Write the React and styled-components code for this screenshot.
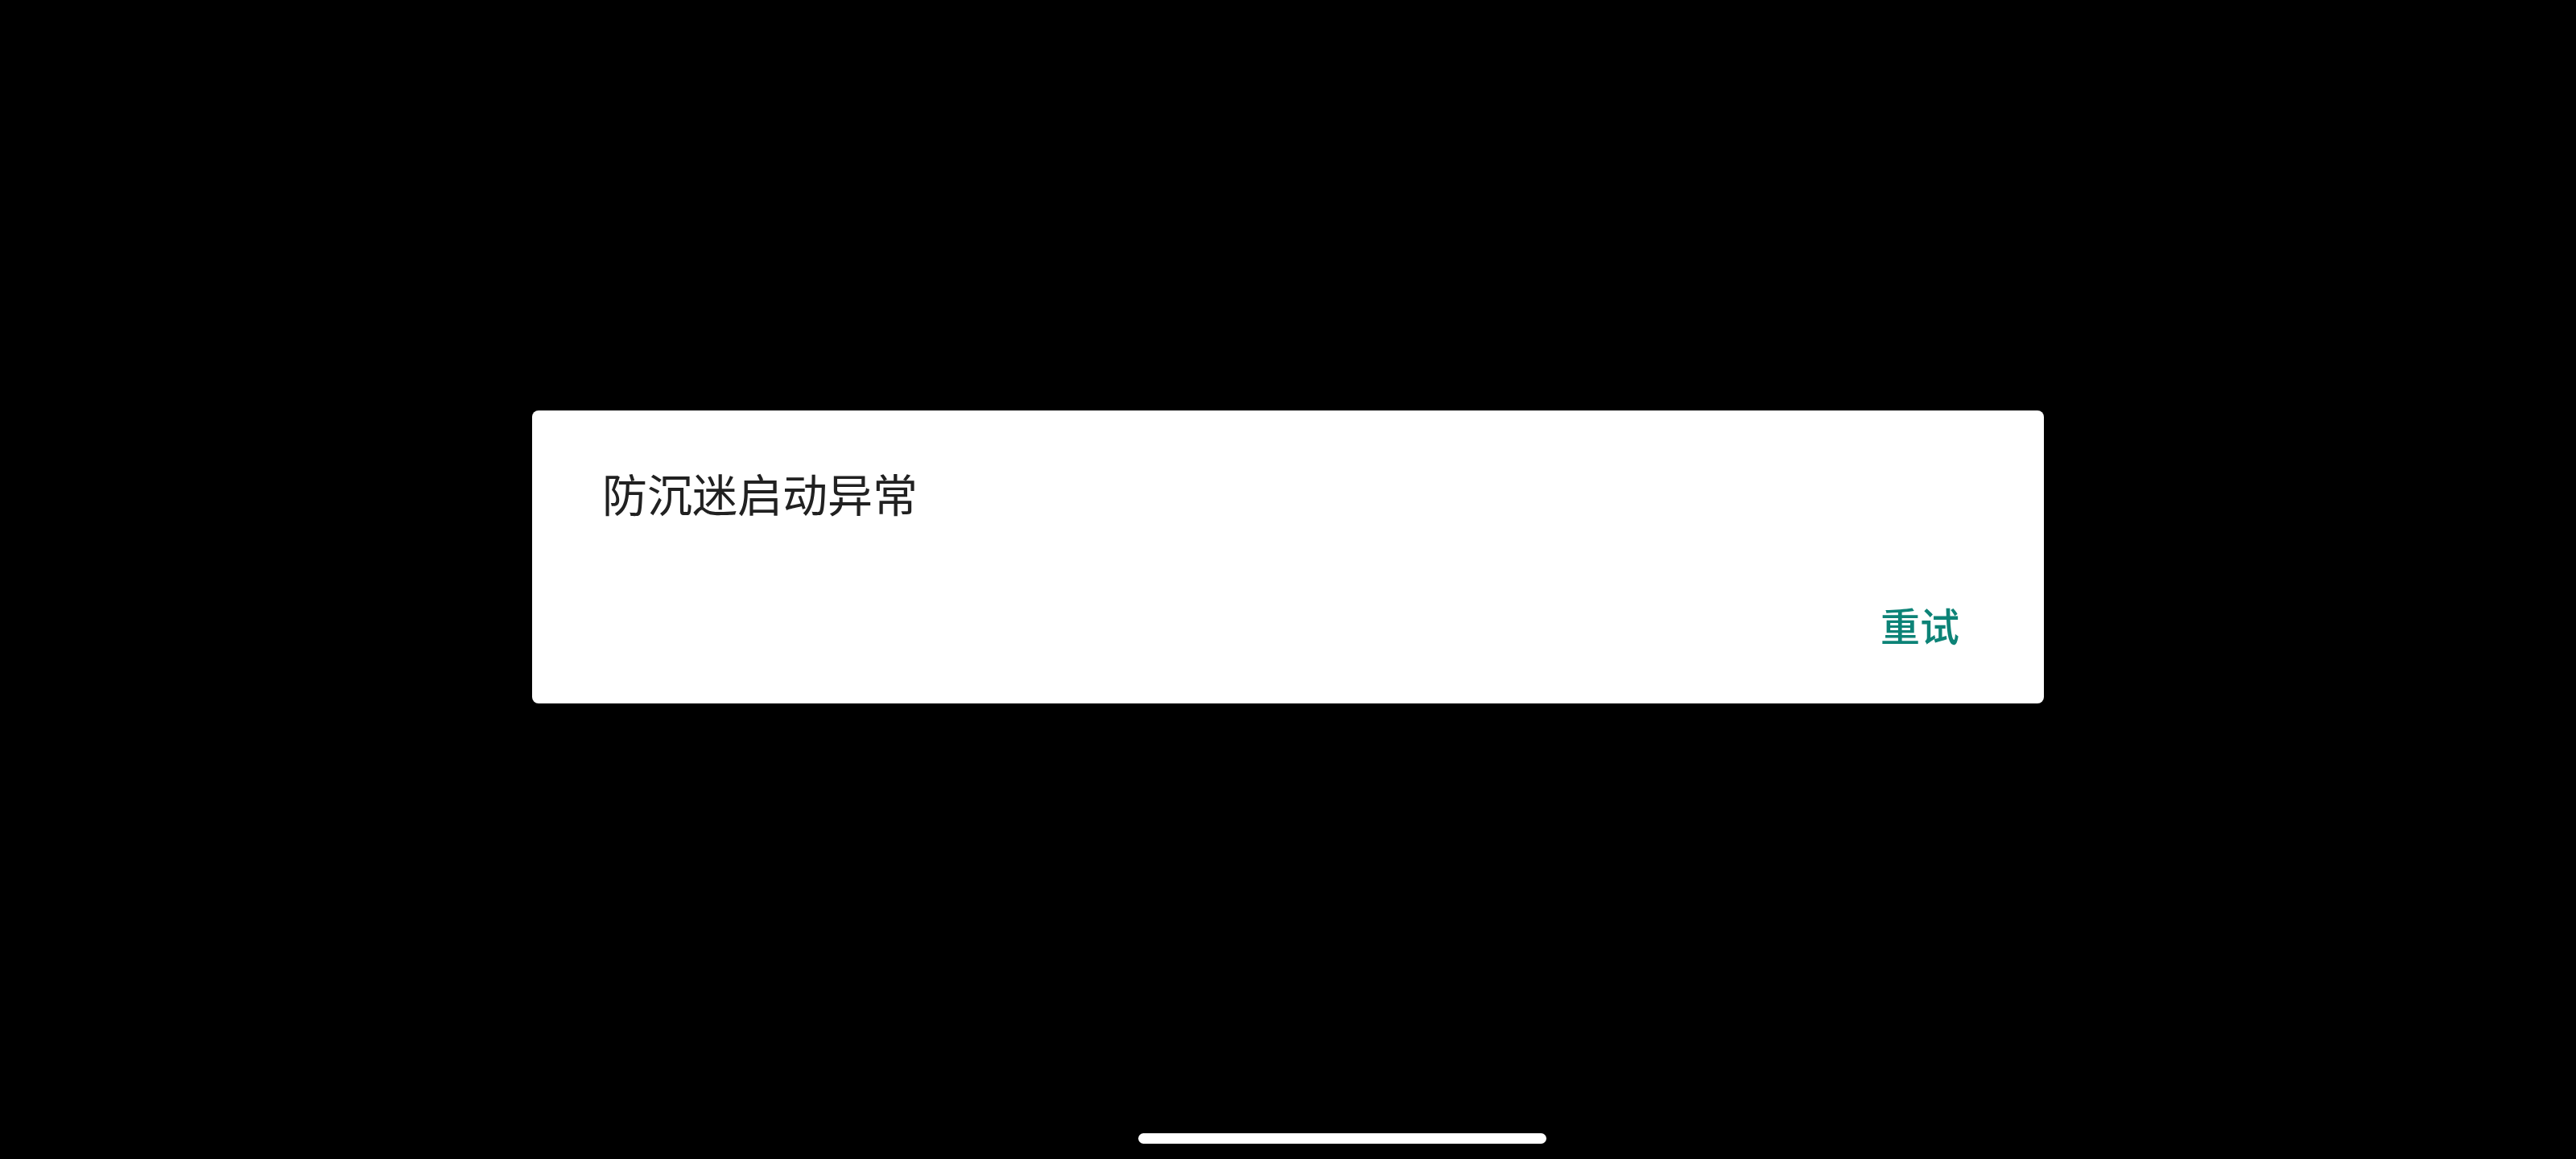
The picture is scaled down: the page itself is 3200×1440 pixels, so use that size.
import React from 'react';
import styled, { createGlobalStyle } from 'styled-components';

const GlobalStyle = createGlobalStyle`
    html, body {
        margin: 0;
        padding: 0;
        background: #000;
    }
    body {
        font-family: "Noto Sans CJK SC", "Noto Sans", sans-serif;
    }
`;

const Screen = styled.div`
    width: 3200px;
    height: 1440px;
    display: flex;
    flex-direction: column;
    background: #000;
    overflow: hidden;
`;

const Dialog = styled.div`
    margin: 510px 0 0 661px;
    width: 1878px;
    height: 364px;
    box-sizing: border-box;
    background: #fff;
    border-radius: 8px;
    display: flex;
    flex-direction: column;
    padding: 66px 105px 0 87px;
`;

const Title = styled.div`
    font-size: 56px;
    line-height: 72px;
    color: #212121;
`;

const Actions = styled.div`
    display: flex;
    justify-content: flex-end;
    margin-top: 98px;
`;

const TextButton = styled.button`
    border: none;
    background: none;
    padding: 0;
    font-family: inherit;
    font-size: 49px;
    line-height: 60px;
    font-weight: 500;
    color: #0d8377;
    cursor: pointer;
`;

const HomeBar = styled.div`
    margin: auto 0 19px 1414px;
    width: 507px;
    height: 13px;
    border-radius: 7px;
    background: #fff;
`;

const App = () => {
    return (
        <Screen>
            <GlobalStyle />
            <Dialog>
                <Title>防沉迷启动异常</Title>
                <Actions>
                    <TextButton>重试</TextButton>
                </Actions>
            </Dialog>
            <HomeBar />
        </Screen>
    );
};

export default App;
